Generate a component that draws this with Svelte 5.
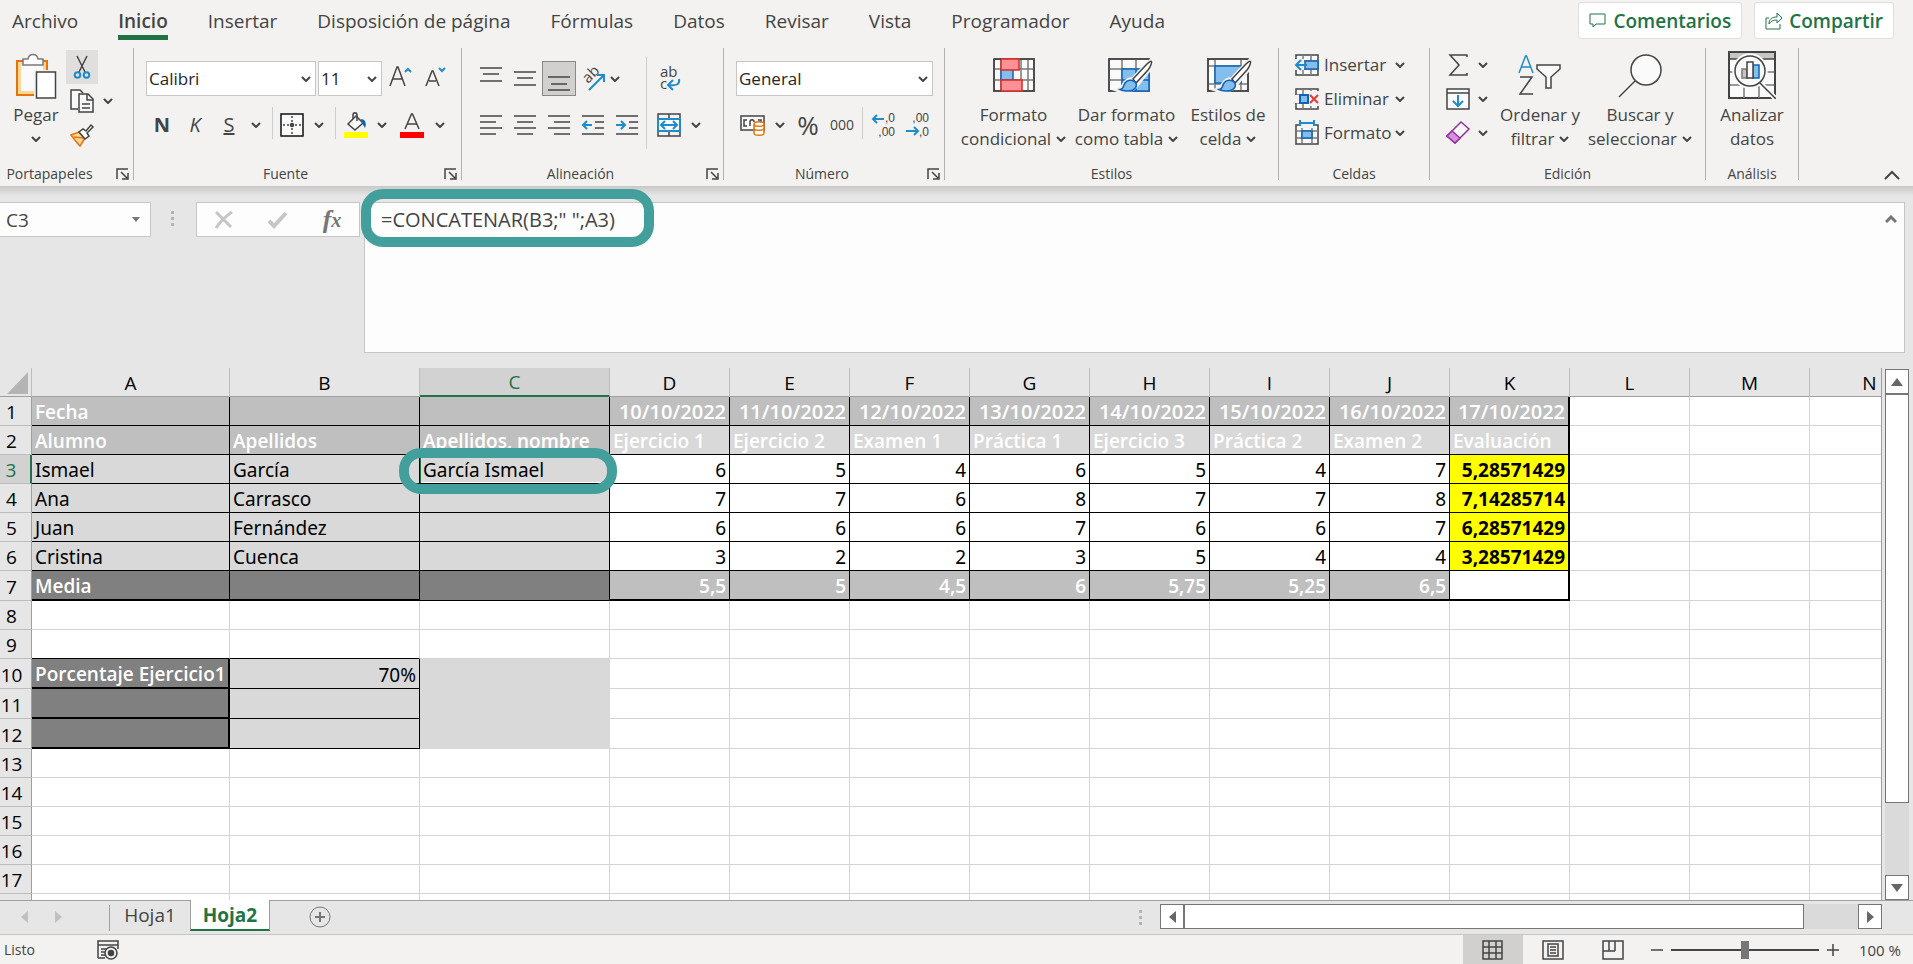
<script lang="ts">
	interface Cell {
		text?: string;
		cls: string;
	}

	const tabs = [
		'Archivo',
		'Inicio',
		'Insertar',
		'Disposición de página',
		'Fórmulas',
		'Datos',
		'Revisar',
		'Vista',
		'Programador',
		'Ayuda'
	];
	const columns = 'ABCDEFGHIJKLMN'.split('');

	const dates = [10, 11, 12, 13, 14, 15, 16, 17].map((day) => `${day}/10/2022`);
	const tasks = [
		'Ejercicio 1',
		'Ejercicio 2',
		'Examen 1',
		'Práctica 1',
		'Ejercicio 3',
		'Práctica 2',
		'Examen 2',
		'Evaluación'
	];
	const students = [
		{ name: 'Ismael', surname: 'García', full: 'García Ismael', marks: '6 5 4 6 5 4 7', final: '5,28571429' },
		{ name: 'Ana', surname: 'Carrasco', full: '', marks: '7 7 6 8 7 7 8', final: '7,14285714' },
		{ name: 'Juan', surname: 'Fernández', full: '', marks: '6 6 6 7 6 6 7', final: '6,28571429' },
		{ name: 'Cristina', surname: 'Cuenca', full: '', marks: '3 2 2 3 5 4 4', final: '3,28571429' }
	];
	const averages = ['5,5', '5', '4,5', '6', '5,75', '5,25', '6,5'];

	const mid = 'line bold mid';
	const cells: Record<number, Cell[]> = {
		1: [
			{ text: 'Fecha', cls: mid },
			{ cls: mid },
			{ cls: mid },
			...dates.map((text) => ({ text, cls: `${mid} num date` }))
		],
		2: [
			{ text: 'Alumno', cls: mid },
			{ text: 'Apellidos', cls: mid },
			{ text: 'Apellidos, nombre', cls: mid },
			...tasks.map((text) => ({ text, cls: 'line bold pale' }))
		],
		7: [
			{ text: 'Media', cls: 'line bold dark thick-b' },
			{ cls: 'line dark thick-b' },
			{ cls: 'line dark' },
			...averages.map((text) => ({ text, cls: `${mid} num thick-b` })),
			{ cls: 'line thick-b' }
		],
		9: [{ cls: 'line-b' }, { cls: 'line-b' }],
		10: [
			{ text: 'Porcentaje Ejercicio1', cls: 'line bold dark thick-b thick-r' },
			{ text: '70%', cls: 'line pale num' },
			{ cls: 'pale bare' }
		],
		11: [{ cls: 'line dark thick-b thick-r' }, { cls: 'line pale' }, { cls: 'pale bare' }],
		12: [{ cls: 'line dark thick-b thick-r' }, { cls: 'line pale' }, { cls: 'pale bare' }]
	};
	students.forEach((s, i) => {
		cells[i + 3] = [
			{ text: s.name, cls: 'line pale' },
			{ text: s.surname, cls: 'line pale' },
			{ text: s.full, cls: 'line pale' },
			...s.marks.split(' ').map((text) => ({ text, cls: 'line num' })),
			{ text: s.final, cls: 'line bold final num' }
		];
	});
	for (let r = 1; r <= 7; r++) cells[r][10].cls += ' thick-r';

	const rows = Array.from({ length: 18 }, (_, i) => i + 1);
	const tallRows = [7, 10, 11, 12];

	let active = $state('Inicio');
	let formula = $state('=CONCATENAR(B3;" ";A3)');
	let cellName = $state('C3');
	let zoom = $state(100);
</script>

{#snippet chevron()}
	<svg class="chev" width="10" height="6" viewBox="0 0 10 6"><path d="M1 1l4 4 4-4" /></svg>
{/snippet}

{#snippet lines(rowsOf: number[][])}
	<svg class="ico" width="24" height="24" viewBox="0 0 24 24">
		{#each rowsOf as [x1, x2, y]}
			<path d="M{x1} {y}H{x2}" />
		{/each}
	</svg>
{/snippet}

{#snippet launcher(name: string)}
	<button class="launcher" aria-label="Configuración de {name}">
		<svg class="ico" width="13" height="12" viewBox="0 0 13 12"><path d="M1 11V1h11M5 4l6 6M12 5v6H6" /></svg>
	</button>
{/snippet}

{#snippet brush()}
	<path
		d="M45 10C47 12 44 16 41 20L29 35C27 38 20 42 11 39C16 38 15 36 18 32C20 29 24 28 26 28L38 15C42 11 44 9 45 10Z"
		fill="#f3f2f1"
		stroke="#f3f2f1"
		stroke-width="4"
	/>
	<path d="M26 28L39 14C42 11 44 10 44.500 10.500C45 11 44 15 41 19L29 32Z" fill="#fff" />
	<path
		d="M13 38.500C17 38 16 35 18 32C20 29 25 28 28 31C31 34 29 37 26 39C22 41 16 40 13 38.500Z"
		fill="#83beec"
		stroke="#1064b5"
	/>
{/snippet}

<div class="app">
	<header class="tabs">
		<nav>
			{#each tabs as tab (tab)}
				<button class="tab" class:active={active === tab} onclick={() => (active = tab)}>{tab}</button>
			{/each}
		</nav>
		<div class="actions">
			<button class="action">
				<svg width="18" height="18" viewBox="0 0 18 18"><path d="M1 2h15v10H7l-3 3v-3H1z" /></svg>
				Comentarios
			</button>
			<button class="action">
				<svg width="18" height="18" viewBox="0 0 18 18"
					><path d="M4 6H1v11h14v-5M4 12c0-5 3-7 8-7V1l5 5-5 5V8c-4 0-6 1-8 4z" /></svg
				>
				Compartir
			</button>
		</div>
	</header>

	<div class="ribbon">
		<section class="group clipboard">
			<div class="body">
				<button class="big">
					<svg class="ico" width="44" height="48" viewBox="0 0 44 48">
						<path d="M3 10h30v34H3z" fill="#fbd797" stroke="#e3730a" stroke-width="2" />
						<path d="M7 14h22v26H7z" fill="#fafafa" stroke="none" />
						<path d="M9 14V8h5c1-6 9-6 10 0h5v6z" fill="#fff" stroke="#7a7a7a" />
						<path d="M20 19h24v29H20z" fill="#f3f2f1" stroke="none" />
						<path d="M22.500 21h19v26h-19z" fill="#fff" />
					</svg>
					<span>Pegar</span>
					<span>{@render chevron()}</span>
				</button>
				<div class="stack">
					<button class="tool hot" aria-label="Cortar">
						<svg class="ico" width="24" height="28" viewBox="0 0 24 28">
							<path d="M7 3l8 16M17 3L9 19" />
							<circle cx="7.500" cy="22" r="2.800" stroke="#1e8bcd" stroke-width="2" />
							<circle cx="16.500" cy="22" r="2.800" stroke="#1e8bcd" stroke-width="2" />
						</svg>
					</button>
					<button class="tool" aria-label="Copiar">
						<svg class="ico" width="24" height="24" viewBox="0 0 24 24">
							<path d="M8 20H1V1h9l3 3" fill="#fafafa" />
							<path d="M9 5h9l5 5v13H9z" fill="#fafafa" />
							<path d="M17 5v6h6M12 15h8M12 19h8" />
						</svg>
					</button>
					<button class="tool" aria-label="Copiar formato">
						<svg class="ico" width="24" height="24" viewBox="0 0 24 24">
							<path d="M1 12l8-3 6 6-5 8c-3-3-6-7-9-11z" fill="#fbd797" stroke="#e3730a" />
							<path d="M4 14l10 1" stroke="#e3730a" />
							<path d="M9 9l4-3 3 2 5-6 2 2-6 6 2 3-4 3z" fill="#fff" />
						</svg>
					</button>
				</div>
				<button class="tool more" aria-label="Más opciones de copia">{@render chevron()}</button>
			</div>
			<h2>Portapapeles</h2>
			{@render launcher('Portapapeles')}
		</section>

		<section class="group font">
			<div class="body rows">
				<div class="row font-top">
					<label class="pick">
						<select aria-label="Fuente"><option>Calibri</option></select>
						{@render chevron()}
					</label>
					<label class="pick">
						<select aria-label="Tamaño"><option>11</option></select>
						{@render chevron()}
					</label>
					<button class="tool" aria-label="Aumentar tamaño">
						<svg class="ico" width="26" height="24" viewBox="0 0 26 24"
							><path d="M1 19L8 0h1l7 19M4 12h9" /><path
								d="M16 5l3-3 3 3"
								stroke="#1e8bcd"
								stroke-width="2"
							/></svg
						>
					</button>
					<button class="tool" aria-label="Disminuir tamaño">
						<svg class="ico" width="26" height="24" viewBox="0 0 26 24"
							><path d="M-1 19L5 4h1l6 15M2 14h7" /><path
								d="M12 1l3 3 3-3"
								stroke="#1e8bcd"
								stroke-width="2"
							/></svg
						>
					</button>
				</div>
				<div class="row font-bottom">
					<button class="tool glyph"><b>N</b></button>
					<button class="tool glyph"><i>K</i></button>
					<button class="tool glyph"><u>S</u></button>
					<button class="tool" aria-label="Tipos de subrayado">{@render chevron()}</button>
					<span class="sep"></span>
					<button class="tool" aria-label="Bordes">
						<svg class="ico" width="24" height="24" viewBox="0 0 24 24">
							<path d="M1 1h22v22H1z" fill="#fafafa" stroke="#111" />
							<path d="M12 3v18M3 12h18" stroke-dasharray="2 2" /><circle cx="12" cy="12" r="1.500" />
						</svg>
					</button>
					<button class="tool" aria-label="Más bordes">{@render chevron()}</button>
					<span class="sep"></span>
					<button class="tool" aria-label="Color de relleno">
						<svg class="ico" width="26" height="26" viewBox="0 0 26 26">
							<path d="M5 12l8-8 7 7-8 7z" fill="#fafafa" />
							<path d="M10 7V3c0-3 4-3 4 0v6" />
							<path d="M18 7c4 0 6 4 4 9l-3-5z" fill="#1064b5" stroke="none" />
							<path d="M1 20h24v6H1z" fill="#ff0" stroke="none" />
						</svg>
					</button>
					<button class="tool" aria-label="Más colores de relleno">{@render chevron()}</button>
					<button class="tool" aria-label="Color de fuente">
						<svg class="ico" width="26" height="26" viewBox="0 0 26 26">
							<path d="M6 17L12.500 2h1L20 17M8 12h10" />
							<path d="M1 20h24v6H1z" fill="#f00" stroke="none" />
						</svg>
					</button>
					<button class="tool" aria-label="Más colores de fuente">{@render chevron()}</button>
				</div>
			</div>
			<h2>Fuente</h2>
			{@render launcher('Fuente')}
		</section>

		<section class="group align">
			<div class="body">
				<div class="rows">
					<div class="row">
						<button class="tool w34" aria-label="Alinear arriba"
							>{@render lines([[1, 23, 1], [4, 20, 7], [1, 23, 14]])}</button
						>
						<button class="tool w34" aria-label="Alinear en el medio"
							>{@render lines([[1, 23, 5], [4, 20, 11], [1, 23, 18]])}</button
						>
						<button class="tool w34 pressed" aria-label="Alinear abajo"
							>{@render lines([[1, 23, 10], [4, 20, 17], [1, 23, 23]])}</button
						>
						<button class="tool w34" aria-label="Orientación">
							<svg class="ico" width="26" height="26" viewBox="0 0 26 26">
								<text class="small-glyph" transform="translate(8 18) rotate(-45)">ab</text>
								<path d="M9 24L24 9M17 9h7v7" stroke="#1e8bcd" stroke-width="2" />
							</svg>
						</button>
						<button class="tool" aria-label="Más orientaciones">{@render chevron()}</button>
					</div>
					<div class="row">
						<button class="tool w34" aria-label="Alinear a la izquierda"
							>{@render lines([[1, 23, 3], [1, 17, 9], [1, 23, 15], [1, 17, 21]])}</button
						>
						<button class="tool w34" aria-label="Centrar"
							>{@render lines([[1, 23, 3], [4, 20, 9], [1, 23, 15], [4, 20, 21]])}</button
						>
						<button class="tool w34" aria-label="Alinear a la derecha"
							>{@render lines([[1, 23, 3], [7, 23, 9], [1, 23, 15], [7, 23, 21]])}</button
						>
						<button class="tool w34" aria-label="Disminuir sangría">
							<svg class="ico" width="24" height="24" viewBox="0 0 24 24">
								<path d="M1 3h22M14 9h9M14 15h9M1 21h22" /><path
									d="M11 12H2M6 8l-4 4 4 4"
									stroke="#1e8bcd"
									stroke-width="2"
								/>
							</svg>
						</button>
						<button class="tool w34" aria-label="Aumentar sangría">
							<svg class="ico" width="24" height="24" viewBox="0 0 24 24">
								<path d="M1 3h22M14 9h9M14 15h9M1 21h22" /><path
									d="M1 12h9M6 8l4 4-4 4"
									stroke="#1e8bcd"
									stroke-width="2"
								/>
							</svg>
						</button>
					</div>
				</div>
				<span class="sep tall"></span>
				<div class="rows">
					<div class="row">
						<button class="tool w44" aria-label="Ajustar texto">
							<svg class="ico" width="24" height="26" viewBox="0 0 24 26">
								<text class="small-glyph" x="3" y="11">ab</text>
								<text class="small-glyph" x="3" y="23">c</text>
								<path d="M22 13c1 5-2 7-10 6M16 14l-5 5 5 5" stroke="#1e8bcd" stroke-width="2" />
							</svg>
						</button>
					</div>
					<div class="row">
						<button class="tool w44" aria-label="Combinar y centrar">
							<svg class="ico" width="24" height="24" viewBox="0 0 24 24">
								<path d="M1 1h22v22H1zM12 1v5M12 18v5" />
								<path d="M1 6h22v12H1z" fill="#fafafa" stroke="#1e8bcd" stroke-width="2" />
								<path d="M4 12h16M8 8l-4 4 4 4M16 8l4 4-4 4" stroke="#1e8bcd" stroke-width="2" />
							</svg>
						</button>
						<button class="tool" aria-label="Más opciones de combinar">{@render chevron()}</button>
					</div>
				</div>
			</div>
			<h2>Alineación</h2>
			{@render launcher('Alineación')}
		</section>

		<section class="group number">
			<div class="body rows">
				<label class="pick">
					<select aria-label="Formato de número"><option>General</option></select>
					{@render chevron()}
				</label>
				<div class="row number-bottom">
					<button class="tool" aria-label="Formato de moneda">
						<svg class="ico" width="26" height="22" viewBox="0 0 26 22">
							<path d="M1 2h23v14H1z" fill="#fafafa" />
							<path d="M7 6H4v6h3M10 12V8c0-3 4-3 4 0M18 6h3v3" />
							<path
								d="M14 10v9c0 3 10 3 10 0v-9c0-3-10-3-10 0zM14 10c0 3 10 3 10 0M14 14c0 3 10 3 10 0"
								fill="#fff"
								stroke="#e3730a"
							/>
						</svg>
					</button>
					<button class="tool" aria-label="Más monedas">{@render chevron()}</button>
					<button class="tool percent">%</button>
					<button class="tool zeros">000</button>
					<span class="sep"></span>
					<button class="tool" aria-label="Aumentar decimales">
						<svg class="ico" width="26" height="26" viewBox="0 0 26 26">
							<text class="digits" x="25" y="10">,0</text>
							<text class="digits" x="25" y="24">,00</text>
							<path d="M14 7H3M7 3L3 7l4 4" stroke="#1e8bcd" stroke-width="2" />
						</svg>
					</button>
					<button class="tool" aria-label="Disminuir decimales">
						<svg class="ico" width="26" height="26" viewBox="0 0 26 26">
							<text class="digits" x="25" y="10">,00</text>
							<text class="digits" x="25" y="24">,0</text>
							<path d="M2 19h12M10 15l4 4-4 4" stroke="#1e8bcd" stroke-width="2" />
						</svg>
					</button>
				</div>
			</div>
			<h2>Número</h2>
			{@render launcher('Número')}
		</section>

		<section class="group styles">
			<div class="body">
				<button class="big">
					<svg class="ico" width="44" height="48" viewBox="0 0 44 48">
						<path d="M2 8h40v32H2z" fill="#fafafa" />
						<path d="M9 8v32M29 8v32M36 8v32M2 18h40M2 29h40" stroke="#7a7a7a" />
						<path d="M9 18h12v11H9z" fill="#83beec" stroke="#1064b5" />
						<path d="M9 8h18v11H9zM9 29h21v11H9z" fill="#ff9196" stroke="#d92b20" />
						<path d="M2 8h7M2 8v32h7M28 8h14v32H31" />
					</svg>
					<span>Formato</span>
					<span>condicional {@render chevron()}</span>
				</button>
				<button class="big">
					<svg class="ico" width="40" height="48" viewBox="0 0 40 48">
						<path d="M2 8h40v32H2z" fill="#fafafa" />
						<path d="M15 8v32M29 8v32M2 18h40M2 29h40" stroke="#7a7a7a" />
						<path d="M15 18h27v22H15z" fill="#83beec" stroke="#1064b5" />
						<path d="M15 29h27M29 18v22" stroke="#1064b5" />
						<path d="M15 8h27v9M15 40H2V8h13" />
						{@render brush()}
					</svg>
					<span>Dar formato</span>
					<span>como tabla {@render chevron()}</span>
				</button>
				<button class="big">
					<svg class="ico" width="44" height="48" viewBox="0 0 44 48">
						<path d="M2 8h40v32H2z" fill="#fafafa" />
						<path d="M9 8v32M35 8v32M2 15h40M2 33h40" stroke="#7a7a7a" />
						<path d="M9 15h26v17H9z" fill="#83beec" stroke="#1064b5" />
						<path d="M2 8h40v32H2z" />
						{@render brush()}
					</svg>
					<span>Estilos de</span>
					<span>celda {@render chevron()}</span>
				</button>
			</div>
			<h2>Estilos</h2>
		</section>

		<section class="group cells">
			<div class="body">
				<div class="stack">
					<button class="wide">
						<svg class="ico" width="24" height="24" viewBox="0 0 24 24">
							<path d="M1 2h22v20H1z" fill="#fafafa" /><path d="M8 2v20M16 2v20M1 8h22M1 16h22" stroke="#7a7a7a" />
							<path d="M10 8h13v8H10z" fill="#83beec" stroke="#1064b5" />
							<path d="M0 6h9v11H0z" fill="#f3f2f1" stroke="none" />
							<path d="M12 12H1M6 7l-5 5 5 5" stroke="#1e8bcd" stroke-width="2" />
						</svg>
						<span>Insertar</span>{@render chevron()}
					</button>
					<button class="wide">
						<svg class="ico" width="24" height="24" viewBox="0 0 24 24">
							<path d="M1 2h22v20H1z" fill="#fafafa" /><path d="M8 2v20M16 2v20M1 8h22M1 16h22" stroke="#7a7a7a" />
							<path d="M0 8h4v8H0zM14 4h10v15H14z" fill="#f3f2f1" stroke="none" />
							<path d="M5 8h8v8H5z" fill="#83beec" stroke="#1064b5" stroke-width="2" />
							<path d="M15 8l8 8M23 8l-8 8" stroke="#e23b34" stroke-width="2" />
						</svg>
						<span>Eliminar</span>{@render chevron()}
					</button>
					<button class="wide">
						<svg class="ico" width="24" height="26" viewBox="0 0 24 26">
							<path d="M1 5h22v19H1z" fill="#fafafa" /><path d="M7 5v19M17 5v19M1 11h22M1 18h22" stroke="#7a7a7a" />
							<path d="M4 0h16v8H4z" fill="#f3f2f1" stroke="none" />
							<path d="M7 11h10v7H7z" fill="#83beec" stroke="#1064b5" />
							<path d="M5 3h14M5 0v6M19 0v6" stroke="#1e8bcd" stroke-width="2" />
						</svg>
						<span>Formato</span>{@render chevron()}
					</button>
				</div>
			</div>
			<h2>Celdas</h2>
		</section>

		<section class="group editing">
			<div class="body">
				<div class="stack">
					<button class="wide narrow" aria-label="Autosuma">
						<svg class="ico" width="24" height="24" viewBox="0 0 24 24"
							><path d="M21 4V2H4l9 10-9 10h17v-2" /></svg
						>{@render chevron()}
					</button>
					<button class="wide narrow" aria-label="Rellenar">
						<svg class="ico" width="24" height="24" viewBox="0 0 24 24">
							<path d="M1 2h22v20H1zM1 6h22" fill="#fafafa" />
							<path d="M12 8v11M7 14l5 5 5-5" stroke="#1e8bcd" stroke-width="2" />
						</svg>{@render chevron()}
					</button>
					<button class="wide narrow" aria-label="Borrar">
						<svg class="ico" width="24" height="24" viewBox="0 0 24 24">
							<path d="M1 15L15 1l8 7L9 22z" fill="#fafafa" stroke="#9331a3" />
							<path d="M1 15l5-5 8 7-5 5z" fill="#d592de" stroke="#9331a3" />
						</svg>{@render chevron()}
					</button>
				</div>
				<button class="big">
					<svg class="ico" width="44" height="48" viewBox="0 0 44 48">
						<path d="M1 22L7.500 5h1L15 22M4 16h9" stroke="#1e8bcd" />
						<path d="M2 26h12L2 43h13" />
						<path d="M19 14h23v4l-9 8v11h-5V26l-9-8z" fill="#fafafa" />
					</svg>
					<span>Ordenar y</span>
					<span>filtrar {@render chevron()}</span>
				</button>
				<button class="big">
					<svg class="ico" width="46" height="48" viewBox="0 0 46 48">
						<circle cx="29" cy="19" r="15" fill="#fafafa" /><path d="M18 30L2 46" />
					</svg>
					<span>Buscar y</span>
					<span>seleccionar {@render chevron()}</span>
				</button>
			</div>
			<h2>Edición</h2>
		</section>

		<section class="group analysis">
			<div class="body">
				<button class="big">
					<svg class="ico" width="48" height="48" viewBox="0 0 48 48">
						<path d="M1 1h46v46H1z" fill="#fafafa" stroke-width="2" />
						<path d="M2 2h44v6H2z" fill="#c8c6c4" stroke="none" />
						<path d="M1 8h46" />
						<path d="M2 21h44M2 34h44M16 34v13M31 34v13" stroke="#7a7a7a" />
						<circle cx="22" cy="20" r="17" fill="#fafafa" stroke="#fafafa" />
						<path d="M32 32l15 15" stroke="#fafafa" stroke-width="5" />
						<circle cx="22" cy="20" r="15" /><path d="M32 32l15 15" />
						<path d="M14 18h5v9h-5z" fill="#c8c6c4" stroke="#7a7a7a" />
						<path d="M25 14h6v13h-6z" fill="#83beec" stroke="#1064b5" />
						<path d="M19 11h6v16h-6z" fill="#fff" />
					</svg>
					<span>Analizar</span>
					<span>datos</span>
				</button>
			</div>
			<h2>Análisis</h2>
		</section>

		<button class="collapse" aria-label="Contraer la cinta">
			<svg class="ico" width="16" height="10" viewBox="0 0 16 10"><path d="M1 9l7-7 7 7" stroke-width="2" /></svg>
		</button>
	</div>

	<div class="formula-bar">
		<label class="name-box">
			<input aria-label="Cuadro de nombres" bind:value={cellName} />
			<svg width="8" height="5" viewBox="0 0 8 5"><path d="M0 0h8L4 5z" fill="#767676" /></svg>
		</label>
		<span class="dots"></span>
		<div class="fx-box">
			<button class="tool" aria-label="Cancelar">
				<svg width="20" height="18" viewBox="0 0 20 18"><path d="M2 1c5 5 10 10 15 15M18 1C12 5 6 11 2 17" /></svg>
			</button>
			<button class="tool" aria-label="Introducir">
				<svg width="20" height="18" viewBox="0 0 20 18"><path d="M1 10l5 5L18 2" stroke-width="4" /></svg>
			</button>
			<button class="tool fx" aria-label="Insertar función">f<small>x</small></button>
		</div>
		<div class="formula">
			<textarea aria-label="Barra de fórmulas" spellcheck="false" bind:value={formula}></textarea>
			<button class="tool shrink" aria-label="Contraer la barra de fórmulas">
				<svg width="12" height="8" viewBox="0 0 12 8"><path d="M1 7l5-5 5 5" /></svg>
			</button>
			<span class="ring"></span>
		</div>
	</div>

	<main class="sheet">
		<div class="grid">
			<table>
				<colgroup>
					<col class="c-head" />
					{#each columns as c (c)}
						<col class={c === 'A' ? 'c-a' : c === 'B' || c === 'C' ? 'c-b' : 'c-n'} />
					{/each}
				</colgroup>
				<thead>
					<tr>
						<th class="corner">
							<svg width="21" height="22" viewBox="0 0 21 22"><path d="M21 0v22H0z" fill="#b4b4b4" /></svg>
						</th>
						{#each columns as c (c)}
							<th scope="col" class:selected={c === 'C'}>{c}</th>
						{/each}
					</tr>
				</thead>
				<tbody>
					{#each rows as r (r)}
						<tr class:taller={tallRows.includes(r)}>
							<th scope="row" class:selected={r === 3}>{r < 18 ? r : ''}</th>
							{#each columns as c, ci (c)}
								{@const cell = cells[r]?.[ci]}
								<td class={cell?.cls} class:current={r === 3 && c === 'C'}
									>{cell?.text ?? ''}{#if r === 3 && c === 'C'}<span class="ring"></span>{/if}</td
								>
							{/each}
						</tr>
					{/each}
				</tbody>
			</table>
		</div>
		<div class="vscroll">
			<button aria-label="Subir"
				><svg width="12" height="8" viewBox="0 0 12 8"><path d="M0 8h12L6 0z" /></svg></button
			>
			<div class="track"><div class="thumb"></div></div>
			<button aria-label="Bajar"
				><svg width="12" height="8" viewBox="0 0 12 8"><path d="M0 0h12L6 8z" /></svg></button
			>
		</div>
	</main>

	<div class="sheet-tabs">
		<button class="arrow" aria-label="Hoja anterior"
			><svg width="7" height="12" viewBox="0 0 7 12"><path d="M7 0v12L0 6z" /></svg></button
		>
		<button class="arrow" aria-label="Hoja siguiente"
			><svg width="7" height="12" viewBox="0 0 7 12"><path d="M0 0v12l7-6z" /></svg></button
		>
		<span class="tab-sep"></span>
		<button class="sheet-tab">Hoja1</button>
		<button class="sheet-tab open">Hoja2</button>
		<button class="add" aria-label="Hoja nueva">
			<svg width="24" height="24" viewBox="0 0 24 24"
				><circle cx="12" cy="12" r="10" /><path d="M12 7v10M7 12h10" stroke-width="2" /></svg
			>
		</button>
		<span class="dots"></span>
		<div class="hscroll">
			<button aria-label="Izquierda"
				><svg width="7" height="12" viewBox="0 0 7 12"><path d="M7 0v12L0 6z" /></svg></button
			>
			<div class="track"><div class="thumb"></div></div>
			<button aria-label="Derecha"
				><svg width="7" height="12" viewBox="0 0 7 12"><path d="M0 0v12l7-6z" /></svg></button
			>
		</div>
	</div>

	<footer class="status">
		<span>Listo</span>
		<svg class="ico macro" width="22" height="20" viewBox="0 0 22 20">
			<path d="M1 18V1h20v8M1 5h20M4 9h5M4 12h4M4 15h4M1 18h7" />
			<circle cx="14" cy="13" r="6" fill="#f3f2f1" /><circle cx="14" cy="13" r="2.500" fill="#444" />
		</svg>
		<button class="view on" aria-label="Normal">
			<svg class="ico" width="22" height="20" viewBox="0 0 22 20"
				><path d="M1 1h19v18H1zM7 1v18M14 1v18M1 7h19M1 13h19" /></svg
			>
		</button>
		<button class="view" aria-label="Diseño de página">
			<svg class="ico" width="22" height="20" viewBox="0 0 22 20"
				><path d="M1 1h20v18H1zM6 4h10v12H6zM8 7h6M8 10h6M8 13h6" /></svg
			>
		</button>
		<button class="view" aria-label="Ver salto de página">
			<svg class="ico" width="22" height="20" viewBox="0 0 22 20"
				><path d="M1 1h20v18H1zM7 1v10M13 1v10M1 11h12" /></svg
			>
		</button>
		<button class="step" aria-label="Alejar"
			><svg class="ico" width="12" height="12" viewBox="0 0 12 12"><path d="M0 6h12" /></svg></button
		>
		<input type="range" min="10" max="190" aria-label="Zoom" bind:value={zoom} />
		<button class="step" aria-label="Acercar"
			><svg class="ico" width="12" height="12" viewBox="0 0 12 12"><path d="M0 6h12M6 0v12" /></svg></button
		>
		<span class="percent-label">{zoom} %</span>
	</footer>
</div>

<style>
	:global(body) {
		margin: 0;
	}

	.app {
		display: flex;
		flex-direction: column;
		height: 100vh;
		overflow: hidden;
		background: #e6e6e6;
		color: #444;
		font-family: 'Open Sans', 'Noto Sans', sans-serif;
		font-size: 17px;
	}

	.app * {
		box-sizing: border-box;
	}

	button {
		padding: 0;
		border: 0;
		background: none;
		color: inherit;
		font: inherit;
	}

	svg {
		display: block;
		flex: none;
	}

	.ico {
		fill: none;
		stroke: #444;
		stroke-width: 1.5;
		overflow: visible;
	}

	.chev {
		fill: none;
		stroke: #444;
		stroke-width: 2;
	}

	/* tab strip */
	.tabs {
		display: flex;
		justify-content: space-between;
		height: 42px;
		padding: 0 19px 0 12px;
		background: #f3f2f1;
	}

	.tabs nav {
		display: flex;
		gap: 40px;
	}

	.tab {
		height: 40px;
		padding-top: 7px;
		border-bottom: 5px solid transparent;
		font-size: 19px;
		line-height: 28px;
		white-space: nowrap;
	}

	.tab.active {
		border-color: #217346;
		font-weight: 600;
	}

	.actions {
		display: flex;
		gap: 12px;
		padding: 2px 0 3px;
	}

	.action {
		display: flex;
		align-items: center;
		gap: 6px;
		padding: 0 10px;
		border: 1px solid #e1dfdd;
		border-radius: 3px;
		background: #fff;
		color: #217346;
		font-size: 19px;
		font-weight: 600;
	}

	.action svg {
		fill: none;
		stroke: #217346;
	}

	/* ribbon */
	.ribbon {
		display: flex;
		flex: none;
		height: 144px;
		padding: 6px 0;
		background: #f3f2f1;
	}

	.group {
		position: relative;
		display: flex;
		flex-direction: column;
		flex: none;
		height: 132px;
		border-right: 1px solid #b3b0ad;
	}

	.clipboard {
		width: 134px;
	}
	.font {
		width: 328px;
	}
	.align {
		width: 262px;
	}
	.number {
		width: 221px;
	}
	.styles {
		width: 334px;
	}
	.cells {
		width: 151px;
	}
	.editing {
		width: 276px;
	}
	.analysis {
		width: 93px;
	}

	.body {
		display: flex;
		flex: none;
		height: 114px;
		padding-left: 12px;
	}

	.clipboard .body {
		padding-left: 0;
	}

	.analysis .body {
		padding: 0;
	}

	h2 {
		margin: 0;
		font-size: 14px;
		font-weight: 400;
		line-height: 24px;
		text-align: center;
	}

	.clipboard h2 {
		padding-right: 34px;
	}

	.font h2,
	.align h2,
	.number h2 {
		padding-right: 24px;
	}

	.launcher {
		position: absolute;
		right: 4px;
		bottom: 0;
	}

	.rows {
		display: flex;
		flex-direction: column;
		gap: 11px;
		padding-top: 13px;
	}

	.row {
		display: flex;
		height: 35px;
	}

	.font-top {
		display: grid;
		grid-template-columns: 170px 64px 36px 36px;
		column-gap: 2px;
	}

	.font-bottom {
		display: grid;
		grid-template-columns: 32px 34px 34px 20px 12px 28px 26px 6px 36px 16px 44px 12px;
	}

	.number-bottom {
		display: grid;
		grid-template-columns: 34px 20px 36px 32px 8px 34px 34px;
	}

	.tool {
		display: grid;
		place-items: center;
	}

	.w34 {
		width: 34px;
	}

	.w44 {
		width: 44px;
	}

	.pressed {
		border: 1px solid #8a8886;
		background: #d2d0ce;
	}

	.glyph {
		font-size: 20px;
		line-height: 24px;
	}

	.percent {
		font-size: 26px;
		line-height: 30px;
	}

	.zeros {
		font-size: 14px;
	}

	.small-glyph {
		fill: #444;
		stroke: none;
		font-size: 15px;
	}

	.digits {
		fill: #444;
		stroke: none;
		font-family: 'Liberation Sans', sans-serif;
		font-size: 12px;
		text-anchor: end;
	}

	.sep {
		justify-self: center;
		width: 1px;
		height: 32px;
		background: #d0cecc;
	}

	.sep.tall {
		height: 92px;
		margin: 9px 0 0 2px;
	}

	.pick {
		display: flex;
		align-items: center;
		height: 35px;
		padding-right: 4px;
		border: 1px solid #c8c6c4;
		background: #fff;
	}

	.number .pick {
		width: 197px;
	}

	.pick select {
		flex: 1;
		min-width: 0;
		padding: 0 2px;
		border: 0;
		appearance: none;
		background: none;
		color: #262626;
		font: inherit;
	}

	.big {
		display: flex;
		flex-direction: column;
		align-items: center;
		padding-top: 3px;
		line-height: 24px;
		white-space: nowrap;
	}

	.big .ico {
		margin-bottom: 4px;
	}

	.big span {
		display: flex;
		align-items: center;
		gap: 5px;
		min-height: 24px;
	}

	.clipboard .big {
		width: 66px;
		padding-left: 6px;
	}

	.styles .big {
		width: 113px;
	}

	.styles .big:last-child {
		width: 90px;
	}

	.editing .big {
		width: 100px;
	}

	.analysis .big {
		width: 100%;
	}

	.stack .tool {
		width: 32px;
		height: 34px;
	}

	.hot {
		background: #e1dfdd;
	}

	.stack {
		padding-top: 2px;
	}

	.more {
		height: 34px;
		margin: 36px 0 0 5px;
	}

	.cells .stack,
	.editing .stack {
		padding-top: 0;
	}

	.cells .body {
		padding-left: 16px;
	}

	.wide {
		display: flex;
		align-items: center;
		gap: 5px;
		height: 34px;
		line-height: 22px;
	}

	.wide span {
		width: 66px;
		text-align: left;
	}

	.narrow {
		gap: 8px;
		width: 48px;
		padding-left: 4px;
	}

	.collapse {
		align-self: flex-end;
		margin: 0 13px 0 auto;
	}

	/* formula bar */
	.formula-bar {
		display: flex;
		flex: none;
		align-items: flex-start;
		height: 182px;
		padding: 16px 8px 15px 0;
		background: linear-gradient(#c8c8c8, #e6e6e6 10px);
	}

	.name-box {
		display: flex;
		align-items: center;
		width: 151px;
		height: 35px;
		padding-right: 10px;
		border: 1px solid #c6c6c6;
		border-left: 0;
		background: #fdfdfd;
	}

	.name-box input {
		flex: 1;
		min-width: 0;
		padding: 0 0 0 6px;
		border: 0;
		background: none;
		color: #444;
		font: 19px 'Open Sans', sans-serif;
	}

	.dots {
		width: 3px;
		height: 15px;
		background: repeating-linear-gradient(#b4b4b4 0 3px, transparent 3px 6px);
	}

	.formula-bar .dots {
		margin: 9px 22px 0 20px;
	}

	.fx-box {
		display: grid;
		grid-template-columns: 54px 54px 54px;
		height: 35px;
		border: 1px solid #c6c6c6;
		background: #fdfdfd;
	}

	.fx-box svg {
		fill: none;
		stroke: #c6c6c6;
		stroke-width: 3;
	}

	.fx-box .fx {
		display: flex;
		align-items: center;
		justify-content: center;
		color: #767676;
		font: italic 700 26px/30px 'Liberation Serif', serif;
	}

	.fx small {
		font-size: 20px;
	}

	.formula {
		position: relative;
		display: flex;
		flex: 1;
		align-items: flex-start;
		height: 151px;
		margin-left: 4px;
		border: 1px solid #c6c6c6;
		background: #fdfdfd;
	}

	.formula textarea {
		flex: 1;
		height: 100%;
		padding: 3px 16px;
		border: 0;
		resize: none;
		background: none;
		color: #444;
		font: 20px/28px 'Open Sans', sans-serif;
	}

	.shrink {
		margin: 12px 7px 0 0;
	}

	.shrink path {
		fill: none;
		stroke: #767676;
		stroke-width: 3;
	}

	/* teal callout drawn round a cell or the formula */
	.ring {
		position: absolute;
		z-index: 2;
		border: 10px solid #439f9c;
		border-radius: 22px;
		pointer-events: none;
	}

	.formula .ring {
		top: -14px;
		left: -4px;
		width: 293px;
		height: 58px;
	}

	.current .ring {
		inset: -7px -8px -11px -21px;
	}

	/* sheet */
	.sheet {
		display: flex;
		flex: 1;
		min-height: 0;
	}

	.grid {
		flex: 1;
		min-width: 0;
		overflow: hidden;
		border-right: 1px solid #9f9f9f;
		background: #fff;
	}

	table {
		width: 0;
		border-spacing: 0;
		table-layout: fixed;
		color: #000;
		font-family: 'Noto Sans', sans-serif;
		font-size: 19px;
	}

	.c-head {
		width: 32px;
	}
	.c-a {
		width: 198px;
	}
	.c-b {
		width: 190px;
	}
	.c-n {
		width: 120px;
	}

	tr {
		height: 29px;
	}

	tr.taller {
		height: 30px;
	}

	th,
	td {
		position: relative;
		height: inherit;
		padding: 2px 3px 0;
		border: 0 solid #d4d4d4;
		border-width: 0 1px 1px 0;
		line-height: 26px;
		white-space: nowrap;
	}

	th {
		padding: 2px 0 0;
		border-color: #bdbdbd;
		background: #e6e6e6;
		font-family: 'Open Sans', sans-serif;
		font-weight: 400;
	}

	thead th {
		border-bottom-color: #9f9f9f;
		line-height: 25px;
	}

	tbody th {
		border-right-color: #9f9f9f;
		padding-right: 8px;
	}

	.corner svg {
		margin-left: 7px;
	}

	th.selected {
		background: #d2d2d2;
		color: #217346;
	}

	thead th.selected {
		border-bottom: 2px solid #217346;
	}

	tbody th.selected {
		border-right: 2px solid #217346;
	}

	.line {
		border-color: #000;
	}

	.line-b {
		border-bottom-color: #000;
	}

	.thick-b {
		border-bottom-width: 2px;
	}

	.thick-r {
		border-right-width: 2px;
	}

	.bold {
		color: #fff;
		font-family: 'Open Sans', sans-serif;
		font-weight: 600;
	}

	.num {
		text-align: right;
	}

	.date {
		font-size: 20px;
	}

	.mid {
		background: #bfbfbf;
	}

	.pale {
		background: #d9d9d9;
	}

	.dark {
		background: #808080;
	}

	.bare {
		border-color: #d9d9d9;
	}

	.final {
		background: #ff0;
		color: #000;
		font-weight: 700;
	}

	.current {
		box-shadow:
			inset 1px 0 #217346,
			inset 0 -1px #fff;
	}

	/* scrollbars */
	.vscroll,
	.hscroll {
		display: flex;
	}

	.vscroll {
		flex-direction: column;
		width: 24px;
		margin: 1px 4px 0 3px;
	}

	.vscroll button,
	.hscroll button {
		display: grid;
		place-items: center;
		flex: none;
		width: 24px;
		height: 25px;
		border: 1px solid #767676;
		background: #fff;
		fill: #666;
	}

	.track {
		flex: 1;
		background: #dadada;
	}

	.thumb {
		border: 1px solid #767676;
		background: #fff;
	}

	.vscroll .thumb {
		height: 85%;
	}

	.hscroll .thumb {
		width: 92%;
		height: 100%;
	}

	.hscroll {
		width: 722px;
		margin: 3px 31px 0 18px;
		height: 25px;
	}

	/* sheet tabs */
	.sheet-tabs {
		display: flex;
		flex: none;
		height: 35px;
		border-top: 1px solid #9f9f9f;
		border-bottom: 1px solid #c6c6c6;
		color: #444;
		font-size: 19px;
	}

	.arrow {
		display: grid;
		place-items: center;
		width: 34px;
		height: 31px;
		fill: #c0c0c0;
	}

	.arrow:first-child {
		margin-left: 7px;
	}

	.tab-sep {
		width: 1px;
		height: 26px;
		margin: 4px 0 0 34px;
		background: #9f9f9f;
	}

	.sheet-tab {
		width: 80px;
		height: 31px;
		padding-bottom: 3px;
		line-height: 28px;
	}

	.sheet-tab.open {
		margin-top: -1px;
		padding: 0;
		border: 1px solid #9f9f9f;
		border-top: 0;
		border-bottom: 2px solid #217346;
		background: #fff;
		color: #217346;
		font-weight: 700;
	}

	.add {
		height: 32px;
		margin: 0 auto 0 38px;
	}

	.add svg {
		fill: none;
		stroke: #767676;
	}

	.sheet-tabs .dots {
		margin-top: 9px;
	}

	/* status bar */
	.status {
		display: flex;
		flex: none;
		align-items: center;
		height: 29px;
		padding: 0 12px 0 4px;
		background: #f3f2f1;
		font-size: 14px;
	}

	.macro {
		margin: 0 auto 0 62px;
	}

	.view {
		display: grid;
		place-items: center;
		width: 60px;
		height: 29px;
	}

	.view.on {
		background: #d2d0ce;
	}

	.step {
		margin: 0 8px;
	}

	input[type='range'] {
		width: 148px;
		height: 18px;
		margin: 0;
		appearance: none;
		background: linear-gradient(#444, #444) center / 100% 2px no-repeat;
	}

	input[type='range']::-webkit-slider-thumb {
		appearance: none;
		width: 8px;
		height: 18px;
		background: #767676;
	}

	.percent-label {
		width: 54px;
		font-size: 15px;
		text-align: right;
	}
</style>
